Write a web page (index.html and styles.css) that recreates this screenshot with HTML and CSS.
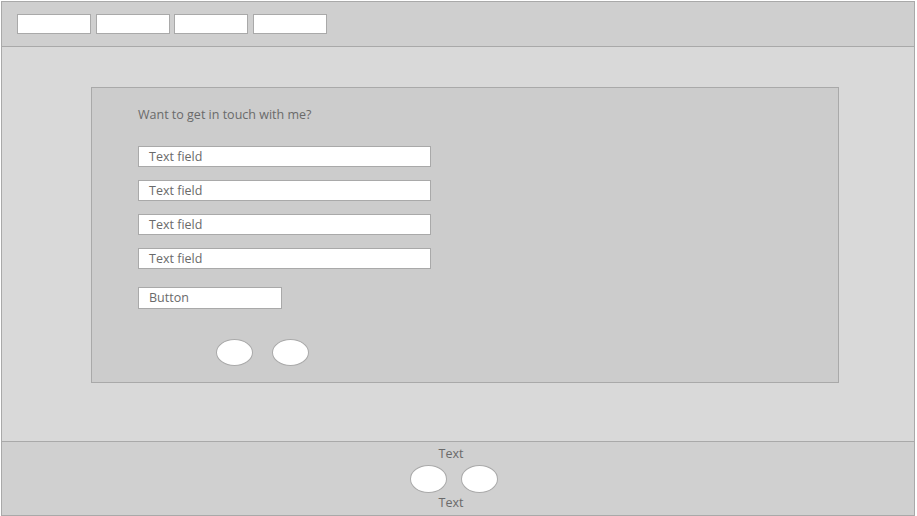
FILE: index.html
```html
<!DOCTYPE html>
<html>
<head>
<meta charset="utf-8">
<link rel="stylesheet" href="styles.css">
</head>
<body>
<div class="frame">
  <header class="header">
    <div class="navbtn"></div>
    <div class="navbtn"></div>
    <div class="navbtn"></div>
    <div class="navbtn"></div>
  </header>
  <main class="main">
    <section class="card">
      <p class="heading">Want to get in touch with me?</p>
      <div class="fields">
        <div class="field">Text field</div>
        <div class="field">Text field</div>
        <div class="field">Text field</div>
        <div class="field">Text field</div>
      </div>
      <div class="button">Button</div>
      <div class="icons">
        <div class="oval"></div>
        <div class="oval"></div>
      </div>
    </section>
  </main>
  <footer class="footer">
    <div class="ftext">Text</div>
    <div class="ficons">
      <div class="oval big"></div>
      <div class="oval big"></div>
    </div>
    <div class="ftext">Text</div>
  </footer>
</div>
</body>
</html>
```
FILE: styles.css
```css
html, body {
  margin: 0;
  padding: 0;
  background: #ffffff;
}
body {
  padding: 1px 0 0 1px;
  font-family: "Open Sans", "Noto Sans", sans-serif;
  color: #6a6a6a;
}
.frame {
  width: 912px;
  height: 513px;
  border: 1px solid #a9a9a9;
  display: flex;
  flex-direction: column;
  background: #d9d9d9;
}
.header {
  background: #cfcfcf;
  border-bottom: 1px solid #a9a9a9;
  display: flex;
  gap: 4.7px;
  padding: 12px 0 0 15px;
  box-sizing: border-box;
  height: 45px;
}
.navbtn {
  width: 72px;
  height: 18px;
  background: #fff;
  border: 1px solid #a9a9a9;
}
.main {
  flex: 1;
  padding: 40px 75px 58px 89px;
}
.card {
  height: 294px;
  background: #cccccc;
  border: 1px solid #a9a9a9;
  padding: 0 0 0 46px;
  display: flex;
  flex-direction: column;
  align-items: flex-start;
}
.heading {
  margin: 18px 0 0 0;
  font-size: 12.5px;
  line-height: 18px;
}
.fields {
  margin-top: 22px;
  display: flex;
  flex-direction: column;
  gap: 13px;
}
.field, .button {
  width: 281px;
  height: 19px;
  background: #fff;
  border: 1px solid #a9a9a9;
  padding-left: 10px;
  font-size: 12.5px;
  line-height: 19px;
}
.button {
  margin-top: 18px;
  width: 132px;
  height: 20px;
  line-height: 20px;
}
.icons {
  display: flex;
  gap: 19px;
  margin: 30px 0 0 78px;
}
.oval {
  width: 35px;
  height: 25px;
  border: 1px solid #a9a9a9;
  border-radius: 50%;
  background: #fff;
}
.oval.big {
  height: 26px;
}
.footer {
  background: #d0d0d0;
  border-top: 1px solid #a9a9a9;
  display: flex;
  flex-direction: column;
  align-items: center;
  padding: 3px 14px 0 0;
  box-sizing: border-box;
  height: 74px;
}
.ftext {
  font-size: 12.5px;
  line-height: 17px;
}
.ficons {
  display: flex;
  gap: 14px;
  margin: 3px 0 1px 5px;
}
```
